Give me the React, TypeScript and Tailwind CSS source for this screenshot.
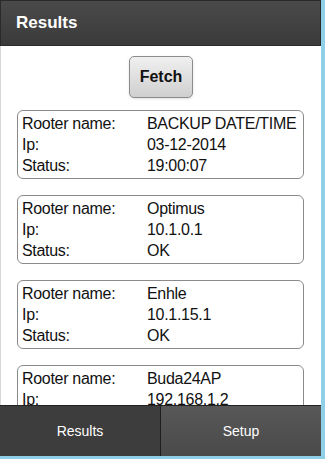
import React from 'react';

const rows = [
  { name: 'BACKUP DATE/TIME', ip: '03-12-2014', status: '19:00:07' },
  { name: 'Optimus', ip: '10.1.0.1', status: 'OK' },
  { name: 'Enhle', ip: '10.1.15.1', status: 'OK' },
  { name: 'Buda24AP', ip: '192.168.1.2', status: 'OK' },
];

function RouterCard({ name, ip, status }: { name: string; ip: string; status: string }) {
  return (
    <div className="ml-[16px] mr-[17px] mb-[16px] rounded-[6px] border border-[#8a8a8a] bg-white pl-[4px] pt-[2px] pb-[2px] text-[16px] leading-[21px] whitespace-nowrap text-[#111] tracking-[-0.3px]">
      <div className="flex">
        <span className="w-[125px] shrink-0">Rooter name:</span>
        <span>{name}</span>
      </div>
      <div className="flex">
        <span className="w-[125px] shrink-0">Ip:</span>
        <span>{ip}</span>
      </div>
      <div className="flex">
        <span className="w-[125px] shrink-0">Status:</span>
        <span>{status}</span>
      </div>
    </div>
  );
}

export default function App() {
  return (
    <div
      className="flex h-[459px] w-[325px] flex-col border-r-[4px] border-b-[3px] border-[#8fd0e8] bg-white"
      style={{ fontFamily: '"Liberation Sans", Arial, sans-serif' }}
    >
      <div className="flex h-[46px] shrink-0 items-center border border-[#2a2a2a] bg-gradient-to-b from-[#4a4a4a] to-[#3a3a3a] pl-[15px]">
        <h1 className="text-[17px] font-bold text-white">Results</h1>
      </div>

      <div className="flex-1 overflow-hidden border-l border-[#d8d8d8]">
        <div className="flex justify-center pt-[10px] pb-[12px]">
          <button className="h-[42px] w-[64px] rounded-[5px] border border-[#8c8c8c] bg-gradient-to-b from-[#f0f0f0] to-[#cfcfcf] text-[16px] font-bold text-[#111] shadow-sm">
            Fetch
          </button>
        </div>
        {rows.map((r) => (
          <RouterCard key={r.name} {...r} />
        ))}
      </div>

      <div className="flex h-[51px] shrink-0 border-t border-[#222]">
        <div className="flex flex-1 items-center justify-center border-r border-[#1e1e1e] bg-[#3d3d3d] text-[14px] text-white">
          Results
        </div>
        <div className="flex flex-1 items-center justify-center bg-gradient-to-b from-[#585858] to-[#4a4a4a] text-[14px] text-white">
          Setup
        </div>
      </div>
    </div>
  );
}
